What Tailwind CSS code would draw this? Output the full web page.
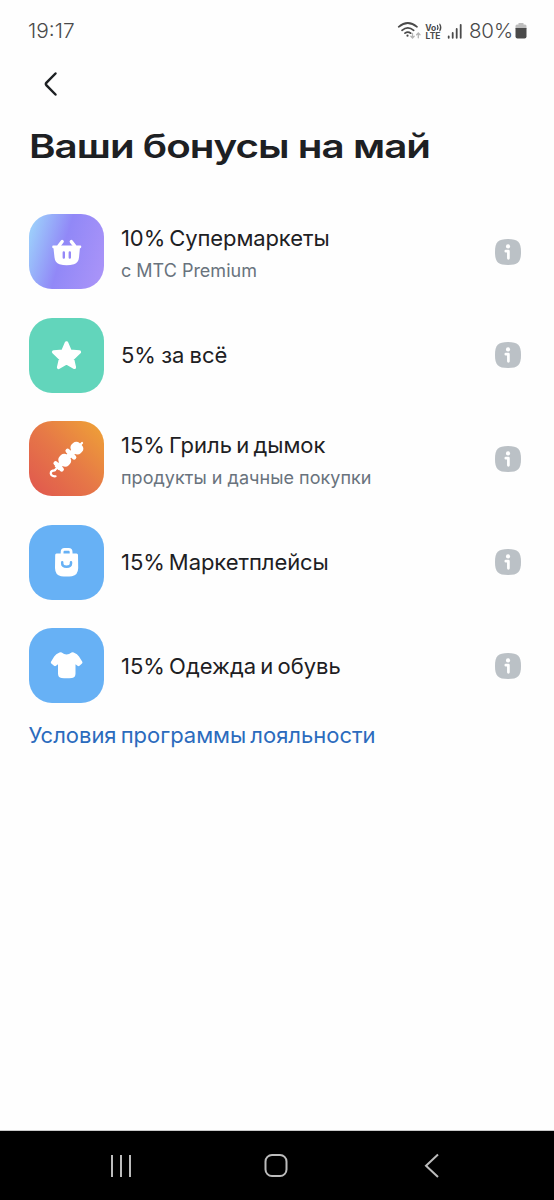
<!DOCTYPE html>
<html lang="ru">
<head>
<meta charset="utf-8">
<title>Ваши бонусы на май</title>
<script src="https://cdn.jsdelivr.net/npm/@tailwindcss/browser@4"></script>
</head>
<body class="bg-white">
<svg class="hidden">
  <symbol id="info" viewBox="0 0 26 26">
    <path d="M13 0C23 0 26 3 26 13S23 26 13 26 0 23 0 13 3 0 13 0Z" fill="#bbc1c6"/>
    <circle cx="13" cy="7.400" r="2.100" fill="#fff"/>
    <path d="M10.800 12.200H13.400V19.300" fill="none" stroke="#fff" stroke-width="2.700" stroke-linecap="round" stroke-linejoin="round"/>
  </symbol>
</svg>
<div class="flex h-[1200px] w-[554px] flex-col bg-[#fefefe] font-['Inter','Liberation_Sans',sans-serif] text-[#1d2023]">
  <header class="flex h-[61px] items-center justify-between pr-[27px] pl-[28px] text-[20.5px] text-[#4a4a4a]">
    <span class="origin-left scale-x-[1.02] pt-px font-light whitespace-nowrap">19:17</span>
    <div class="flex items-center">
      <svg class="h-[22px] w-[70px]" viewBox="397 19 70 22" fill="none" stroke="#4a4a4a" stroke-width="1.700" stroke-linecap="round">
        <path d="M398.700 25.800Q407.800 18.200 417 25.800M402 29.300Q407.800 24.300 413.700 29.300M405 32.200Q407.800 30 410.700 32.200"/>
        <circle cx="407.500" cy="34.700" r="1.100" fill="#4a4a4a" stroke="none"/>
        <path d="M412.500 32.500V37M410.800 35.300L412.500 37L414.200 35.300M418.300 36.800V32M416.600 33.700L418.300 32L420 33.700" stroke="#b5b5b5" stroke-width="1.300"/>
        <text font-weight="700" fill="#4a4a4a" stroke="none"><tspan x="425.200" y="29.500" font-size="8.500">Vo</tspan><tspan x="425.600" y="37.900" font-size="8.500">LTE</tspan></text>
        <path d="M437.400 24.500Q438.500 26.500 437.400 28.500M439.800 23.200Q441.800 26.500 439.800 29.800" stroke-width="1.200"/>
        <path d="M448.700 35.300V36.800M452.700 32V36.800M456.700 28V36.800M460.700 23.800V36.800" stroke-width="1.800"/>
      </svg>
      <span class="mr-[2px] ml-[2px] pt-px font-light tracking-[-0.1px] whitespace-nowrap">80%</span>
      <svg class="h-[16px] w-[12px]" viewBox="0 0 12 16"><path d="M3.500 0H8.500V1.500H10Q11.500 1.500 11.500 3V6H.5V3Q.5 1.500 2 1.500H3.500Z" fill="#bdbdbd"/><path d="M.5 5H11.500V13.500Q11.500 15.500 9.500 15.500H2.500Q.5 15.500 .5 13.500Z" fill="#4a4a4a"/></svg>
    </div>
  </header>
  <main class="flex-1 pr-[33px] pl-[28.5px]">
    <svg class="mt-[9px] ml-[12px] h-[28px] w-[20px]" viewBox="0 0 20 28" fill="none" stroke="#1d2023" stroke-width="2.500" stroke-linecap="round" stroke-linejoin="round"><path d="M14.500 3.500L5.500 12.700Q4.300 14 5.500 15.300L14.500 24.500"/></svg>
    <h1 class="mt-[28px] h-[40px] w-max origin-left scale-x-[1.222] text-[33px] leading-[40px] font-[560] tracking-[-0.8px] whitespace-nowrap">Ваши бонусы на май</h1>
    <ul class="mt-[48px] flex flex-col gap-[28.6px]">
      <li class="flex h-[75px] items-center">
        <svg class="size-[75px]" viewBox="0 0 75 75">
          <defs><linearGradient id="violet" x1="0" y1=".35" x2="1" y2=".65"><stop offset="0" stop-color="#9ccbfb"/><stop offset=".45" stop-color="#9188f7"/><stop offset="1" stop-color="#a893f8"/></linearGradient></defs>
          <rect width="75" height="75" rx="23" fill="url(#violet)"/>
          <path d="M24.200 31.500H51.300Q52.300 31.500 52.300 32.800T51.300 34.200H50.900L50 43.500Q49.500 48.800 45 50.300Q37.500 52.300 30.500 50.300Q26 48.800 25.500 43.500L24.500 34.200H24Q23.200 34 23.200 32.800T24.200 31.500Z" fill="#fff"/>
          <path d="M29.800 32L33.200 27.600M45.800 32L42.300 27.600" stroke="#fff" stroke-width="3.300" stroke-linecap="round"/>
          <path d="M34.800 38.500V43.500M40.800 38.500V43.500" stroke="#9588f8" stroke-width="2.400" stroke-linecap="round"/>
        </svg>
        <div class="ml-[17.5px] flex-1 pt-[6px] whitespace-nowrap">
          <p class="w-max text-[22px] leading-[32px] tracking-[-0.1px] [word-spacing:-2px]">10% Супермаркеты</p>
          <p class="w-max text-[18px] leading-[33px] text-[#69737d]">с МТС Premium</p>
        </div>
        <svg class="size-[26px]"><use href="#info"/></svg>
      </li>
      <li class="flex h-[75px] items-center">
        <svg class="size-[75px]" viewBox="0 0 75 75">
          <rect width="75" height="75" rx="23" fill="#62d5bb"/>
          <path d="M37.500 25L41 33.200L50.300 34L43.300 40.600L45.300 49.300L37.500 44.800L29.700 49.300L31.700 40.600L24.700 34L34 33.200Z" fill="#fff" stroke="#fff" stroke-width="3.600" stroke-linejoin="round"/>
        </svg>
        <div class="ml-[17.5px] flex-1 whitespace-nowrap">
          <p class="w-max text-[22px] leading-[32px] [word-spacing:-1px]">5% за всё</p>
        </div>
        <svg class="size-[26px]"><use href="#info"/></svg>
      </li>
      <li class="flex h-[75px] items-center">
        <svg class="size-[75px]" viewBox="0 0 75 75">
          <defs><linearGradient id="grill" x1="0" y1="1" x2="1" y2="0"><stop offset="0" stop-color="#e0564f"/><stop offset=".5" stop-color="#e67847"/><stop offset="1" stop-color="#efa436"/></linearGradient></defs>
          <rect width="75" height="75" rx="23" fill="url(#grill)"/>
          <g transform="translate(37.500 37.500) rotate(-45)" fill="#fff">
            <path d="M-16 0H22" stroke="#fff" stroke-width="2.200" stroke-linecap="round"/>
            <path d="M-16.500 .2Q-19.500 -2.800 -21.700 -.6Q-23.600 2 -20.300 4.800" fill="none" stroke="#fff" stroke-width="2.200" stroke-linecap="round"/>
            <rect x="-13.300" y="-6.500" width="4.400" height="13" rx="2.200"/>
            <rect x="-8" y="-6.300" width="11" height="12.600" rx="4.500"/>
            <rect x="4" y="-6.800" width="4.400" height="13.600" rx="2.200"/>
            <rect x="9.200" y="-6.300" width="11" height="12.600" rx="4.500"/>
            <path d="M-14 0H12" stroke="#fff" stroke-width="5.500"/>
          </g>
        </svg>
        <div class="ml-[17.5px] flex-1 pt-[6px] whitespace-nowrap">
          <p class="w-max text-[22px] leading-[32px] [word-spacing:-2px]">15% Гриль и дымок</p>
          <p class="w-max text-[18px] leading-[33px] tracking-[0.03px] text-[#69737d]">продукты и дачные покупки</p>
        </div>
        <svg class="size-[26px]"><use href="#info"/></svg>
      </li>
      <li class="flex h-[75px] items-center">
        <svg class="size-[75px]" viewBox="0 0 75 75">
          <rect width="75" height="75" rx="23" fill="#67b1f5"/>
          <path d="M27.500 28.500H47.500Q49 28.500 49 30L49.200 43Q49 50.200 43 51.200Q37.500 52 32 51.200Q26.200 50.200 26 43L26.200 30Q26.200 28.500 27.500 28.500Z" fill="#fff"/>
          <path d="M33.100 29.500V27Q33.100 24.300 35.600 24.300H39.600Q42.100 24.300 42.100 27V29.500" fill="none" stroke="#fff" stroke-width="2.800"/>
          <path d="M33.200 37.200V38.500Q33.200 41.700 37.600 41.700T42 38.500V37.200" fill="none" stroke="#67b1f5" stroke-width="2.500" stroke-linecap="round"/>
        </svg>
        <div class="ml-[17.5px] flex-1 whitespace-nowrap">
          <p class="w-max text-[22px] leading-[32px] tracking-[-0.07px] [word-spacing:-2px]">15% Маркетплейсы</p>
        </div>
        <svg class="size-[26px]"><use href="#info"/></svg>
      </li>
      <li class="flex h-[75px] items-center">
        <svg class="size-[75px]" viewBox="0 0 75 75">
          <rect width="75" height="75" rx="23" fill="#67b1f5"/>
          <path d="M30.500 24.500Q31.500 23.800 32.700 24.500Q37.500 28.300 42.500 24.500Q43.500 23.800 44.700 24.500Q48.500 26 50 28.500L53.300 33.800Q53.800 34.800 53 35.500L50.500 37.800Q49.500 38.700 48.500 37.800L46.500 36.200V45.500Q46.500 49.500 43 50Q37.500 50.700 32.500 50Q29 49.500 29 45.500V36.200L27 37.800Q26 38.700 25 37.800L22.300 35.500Q21.500 34.800 22 33.800L25.200 28.500Q26.800 26 30.500 24.500Z" fill="#fff"/>
        </svg>
        <div class="ml-[17.5px] flex-1 whitespace-nowrap">
          <p class="w-max text-[22px] leading-[32px] [word-spacing:-2px]">15% Одежда и обувь</p>
        </div>
        <svg class="size-[26px]"><use href="#info"/></svg>
      </li>
    </ul>
    <a class="mt-[16px] block w-max text-[22px] leading-[32px] tracking-[-0.02px] whitespace-nowrap text-[#2b6bbd] [word-spacing:-2px]">Условия программы лояльности</a>
  </main>
  <nav class="h-[70px] border-t border-[#c9c9c9] bg-black">
    <svg class="h-[69px] w-[554px]" viewBox="0 1131 554 69" fill="none" stroke="#bcbcbc" stroke-width="2">
      <path d="M112 1155V1177M121 1155V1177M130 1155V1177"/>
      <rect x="265.500" y="1155" width="21" height="21" rx="6.500"/>
      <path d="M438 1154.500L426 1165.700L438 1177"/>
    </svg>
  </nav>
</div>
</body>
</html>
